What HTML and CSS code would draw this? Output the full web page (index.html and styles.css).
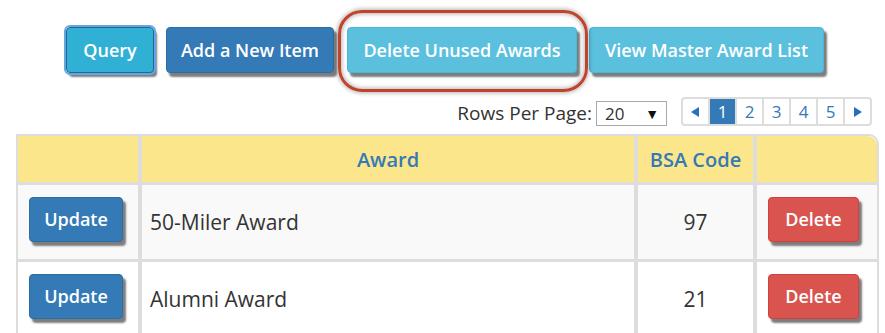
FILE: index.html
```html
<!DOCTYPE html>
<html lang="en">
<head>
    <meta charset="UTF-8">
    <title>Awards</title>
    <link rel="stylesheet" href="styles.css">
</head>
<body>
    <div class="page">
        <!-- Top Buttons -->
        <div class="toolbar">
            <button class="btn btn-info btn-focus">Query</button>
            <button class="btn btn-primary">Add a New Item</button>
            <div class="highlight">
                <button class="btn btn-light">Delete Unused Awards</button>
            </div>
            <button class="btn btn-light">View Master Award List</button>
        </div>

        <!-- Paging -->
        <div class="pager-row">
            <label class="rows-label">Rows Per Page:</label>
            <div class="fake-select">
                <span>20</span>
                <span class="caret">&#9660;</span>
            </div>
            <ul class="pagination">
                <li><a href="#"><svg width="9" height="10" viewBox="0 0 9 10"><polygon points="8,0 8,10 0,5" fill="#2a6cc0"/></svg></a></li>
                <li class="active"><a href="#">1</a></li>
                <li><a href="#">2</a></li>
                <li><a href="#">3</a></li>
                <li><a href="#">4</a></li>
                <li><a href="#">5</a></li>
                <li><a href="#"><svg width="9" height="10" viewBox="0 0 9 10"><polygon points="1,0 9,5 1,10" fill="#2a6cc0"/></svg></a></li>
            </ul>
        </div>

        <!-- Awards Table -->
        <table class="grid">
            <thead>
                <tr>
                    <th class="col-btn"></th>
                    <th class="col-award">Award</th>
                    <th class="col-code">BSA Code</th>
                    <th class="col-btn last"></th>
                </tr>
            </thead>
            <tbody>
                <tr class="odd">
                    <td class="center"><button class="btn btn-primary btn-update">Update</button></td>
                    <td>50-Miler Award</td>
                    <td class="center">97</td>
                    <td class="center"><button class="btn btn-danger btn-delete">Delete</button></td>
                </tr>
                <tr>
                    <td class="center"><button class="btn btn-primary btn-update">Update</button></td>
                    <td>Alumni Award</td>
                    <td class="center">21</td>
                    <td class="center"><button class="btn btn-danger btn-delete">Delete</button></td>
                </tr>
            </tbody>
        </table>
    </div>
</body>
</html>
```

FILE: styles.css
```css
/* General */
body {
    margin: 0;
    font-family: "Open Sans", "Noto Sans", sans-serif;
    color: #333;
    background: #fff;
}

.page {
    padding: 0 13px 0 16px;
}

/* Buttons */
.btn {
    font-family: inherit;
    font-size: 18px;
    font-weight: 600;
    color: #fff;
    border: 1px solid transparent;
    border-radius: 4px;
    padding: 0;
    height: 46px;
    white-space: nowrap;
    cursor: pointer;
    box-shadow: 3px 4px 2px #7d7d7d;
}

.btn-info {
    background-color: #31b0d5;
    border-color: #1b6d85;
}

.btn-focus {
    outline: 2px solid #6aa2e8;
    outline-offset: 0;
}

.btn-primary {
    background-color: #337ab7;
    border-color: #2e6da4;
}

.btn-light {
    background-color: #5bc0de;
    border-color: #46b8da;
}

.btn-danger {
    background-color: #d9534f;
    border-color: #d43f3a;
}

.btn-update {
    width: 94px;
    height: 45px;
    margin: 0 4px 6px 0;
}

.btn-delete {
    width: 91px;
    height: 45px;
    margin: 0 7px 6px 0;
}

/* Toolbar */
.toolbar {
    display: flex;
    align-items: center;
    gap: 12px;
    padding-top: 27px;
    padding-left: 50px;
}

.toolbar .btn-info {
    width: 88px;
}

.toolbar .btn-primary {
    width: 168px;
}

.toolbar .btn-light {
    width: 235px;
}

.toolbar .highlight .btn-light {
    width: 230px;
}

.highlight {
    position: relative;
    display: flex;
    margin-left: 1px;
}

.highlight::after {
    content: "";
    position: absolute;
    top: -17px;
    left: -9px;
    right: -11px;
    bottom: -19px;
    border: 3px solid #c0432b;
    border-radius: 24px;
    box-shadow: 0 0 4px 1px rgba(0, 0, 0, 0.3), inset 0 0 4px 1px rgba(0, 0, 0, 0.3);
    pointer-events: none;
}

/* Paging */
.pager-row {
    display: flex;
    justify-content: flex-end;
    align-items: center;
    margin-top: 24px;
    height: 29px;
}

.rows-label {
    font-size: 19px;
    margin-right: 4px;
    margin-top: 2px;
}

.fake-select {
    display: flex;
    justify-content: space-between;
    align-items: center;
    width: 54px;
    height: 23px;
    border: 1px solid #a9a9a9;
    padding: 0 7px 0 8px;
    font-size: 17px;
    margin-top: 4px;
    margin-right: 14px;
}

.fake-select .caret {
    font-size: 14px;
    color: #111;
}

.pagination {
    display: flex;
    list-style: none;
    margin: 0;
    padding: 0;
    border: 2px solid #ddd;
    border-radius: 4px;
}

.pagination li a {
    display: flex;
    align-items: center;
    justify-content: center;
    width: 25px;
    height: 25px;
    border-left: 2px solid #ddd;
    color: #337ab7;
    text-decoration: none;
    font-size: 17px;
}

.pagination li:first-child a {
    border-left: none;
}

.pagination li.active a {
    background-color: #337ab7;
    color: #fff;
}

/* Table */
.grid {
    width: 856px;
    margin-top: 8px;
    table-layout: fixed;
    border-collapse: separate;
    border-spacing: 0;
    border: 2px solid #ddd;
    border-radius: 0 10px 0 0;
    font-size: 21px;
}

.grid th,
.grid td {
    border-right: 4px solid #ddd;
    border-bottom: 3px solid #ddd;
    padding: 0 8px;
}

.grid th.last,
.grid td:last-child {
    border-right: none;
}

.grid th {
    background-color: #fce68c;
    color: #337ab7;
    font-weight: 600;
    font-size: 20px;
    height: 46px;
    text-align: center;
}

.grid th.last {
    border-radius: 0 9px 0 0;
}

.col-btn {
    width: 104px;
}

.col-award {
    width: 476px;
}

.col-code {
    width: 99px;
}

.grid td {
    height: 74px;
}

.grid tr.odd td {
    background-color: #f9f9f9;
}

.grid td.center {
    text-align: center;
}
```
